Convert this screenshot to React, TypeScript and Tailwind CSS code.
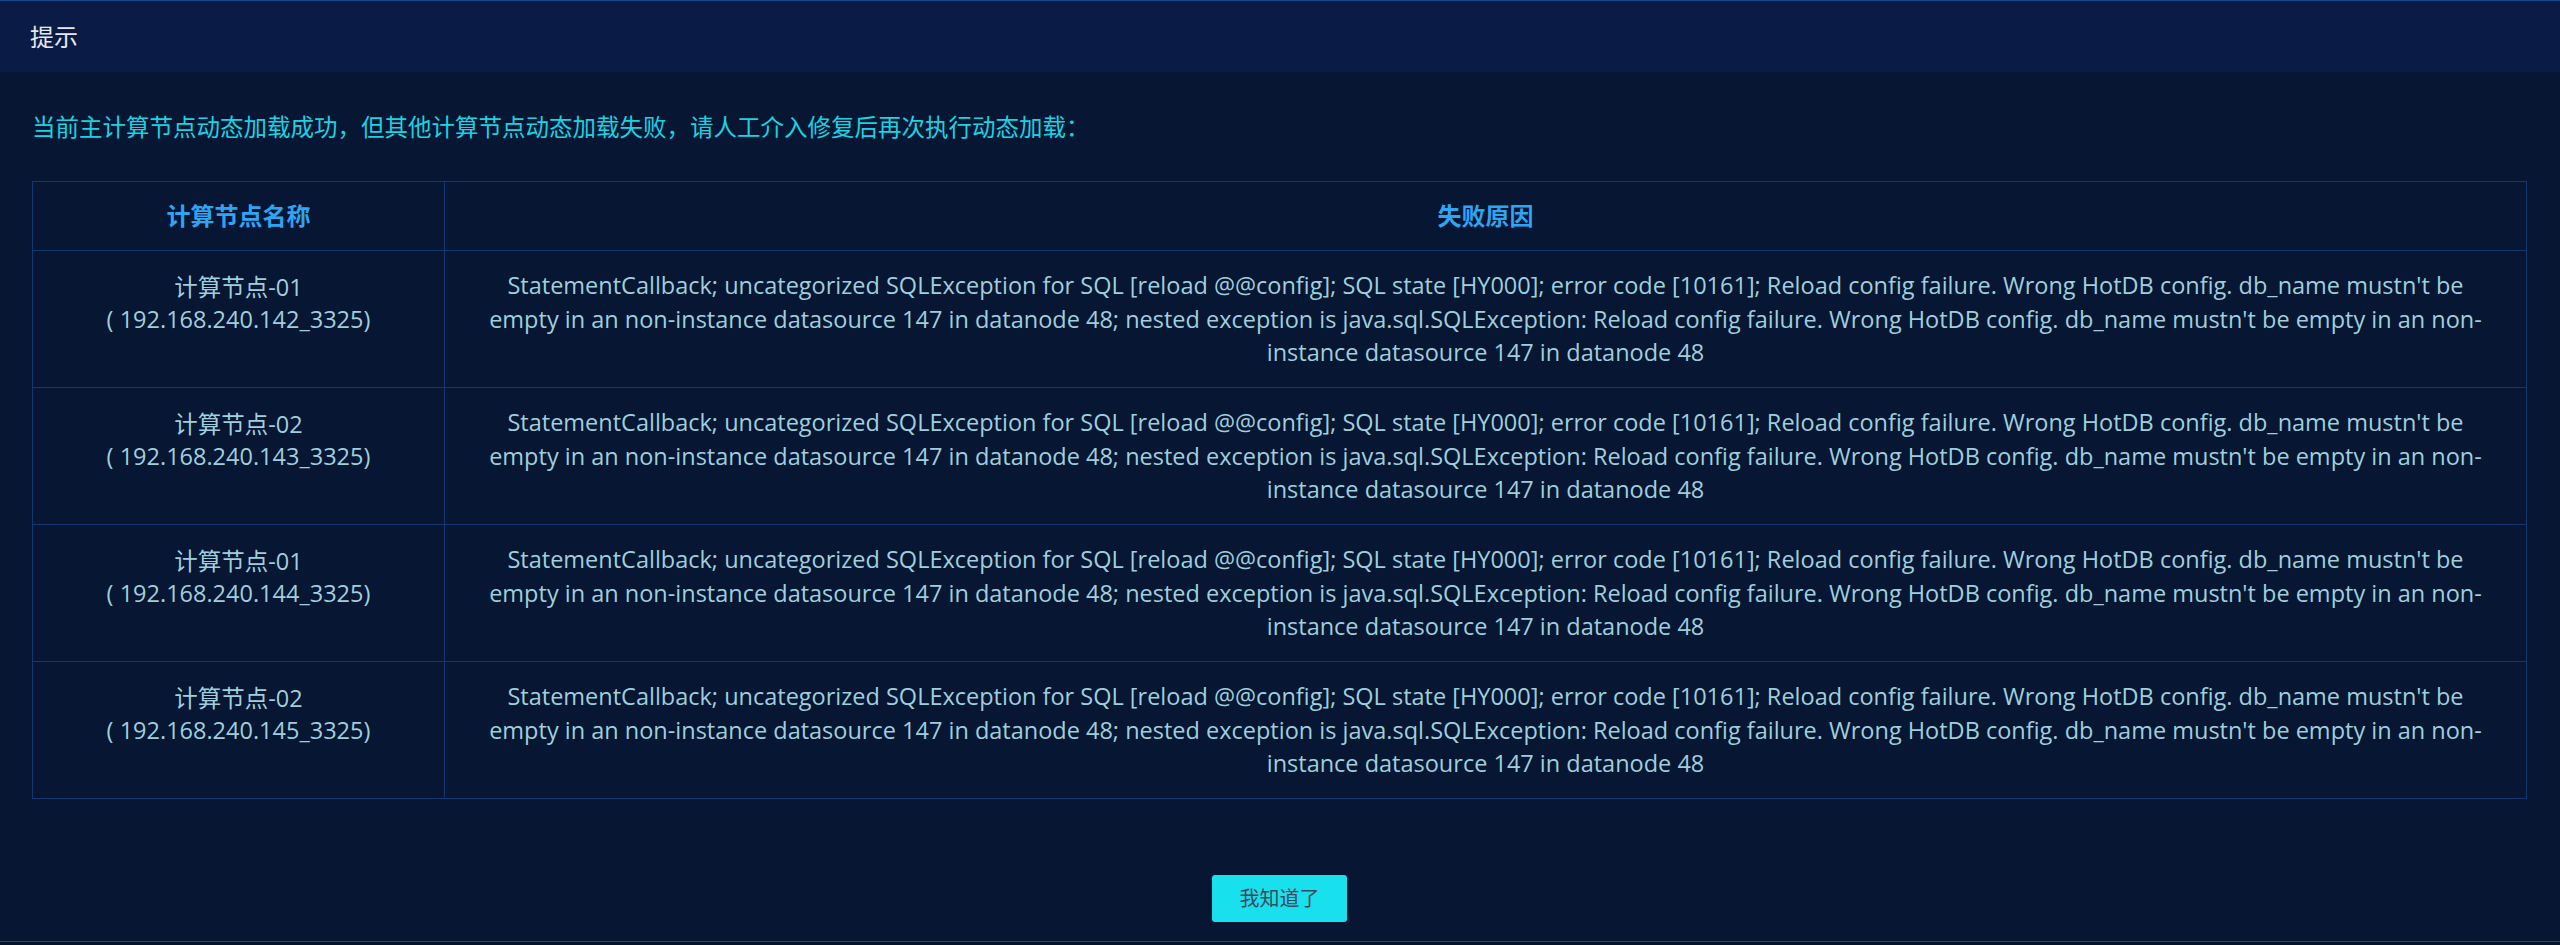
import React from "react";

const rows = [
  { name: "计算节点-01", ip: "( 192.168.240.142_3325)" },
  { name: "计算节点-02", ip: "( 192.168.240.143_3325)" },
  { name: "计算节点-01", ip: "( 192.168.240.144_3325)" },
  { name: "计算节点-02", ip: "( 192.168.240.145_3325)" },
];

const reasonLines = [
  "StatementCallback; uncategorized SQLException for SQL [reload @@config]; SQL state [HY000]; error code [10161]; Reload config failure. Wrong HotDB config. db_name mustn't be",
  "empty in an non-instance datasource 147 in datanode 48; nested exception is java.sql.SQLException: Reload config failure. Wrong HotDB config. db_name mustn't be empty in an non-",
  "instance datasource 147 in datanode 48",
];

export default function App() {
  return (
    <div
      className="w-[2560px] h-[945px] bg-[#051329] overflow-hidden"
      style={{ fontFamily: '"Open Sans", "Noto Sans CJK SC", sans-serif' }}
    >
      <div className="h-[942px] flex flex-col bg-[#061633] border-t border-b border-[#1b4a8a]">
        <div className="h-[71px] shrink-0 bg-[#0a1c45] flex items-center pl-[30px] text-[24px] text-[#e4e8f0]">
          提示
        </div>
        <div className="flex-1 flex flex-col pl-[32px] pr-[33px]">
          <div className="mt-[37px] h-[36px] leading-[36px] text-[23.5px] text-[#19d3e2]">
            当前主计算节点动态加载成功，但其他计算节点动态加载失败，请人工介入修复后再次执行动态加载：
          </div>
          <table className="mt-[36px] w-full table-fixed border-collapse border border-[#12386f]">
            <colgroup>
              <col className="w-[412px]" />
              <col />
            </colgroup>
            <thead>
              <tr className="h-[69px]">
                <th className="border border-[#12386f] text-center text-[24px] font-bold text-[#2ea5f2] align-middle">
                  计算节点名称
                </th>
                <th className="border border-[#12386f] text-center text-[24px] font-bold text-[#2ea5f2] align-middle">
                  失败原因
                </th>
              </tr>
            </thead>
            <tbody>
              {rows.map((r, i) => (
                <tr key={i} className="h-[137px]">
                  <td className="border border-[#12386f] align-top pt-[20px] text-center text-[23.5px] leading-[32px] text-[#9fcfdc]">
                    <div>{r.name}</div>
                    <div className="whitespace-nowrap">{r.ip}</div>
                  </td>
                  <td className="border border-[#12386f] align-top pt-[18px] text-center text-[23.5px] leading-[33.5px] text-[#9fcfdc]">
                    {reasonLines.map((l, j) => (
                      <div key={j} className="whitespace-nowrap">
                        {l}
                      </div>
                    ))}
                  </td>
                </tr>
              ))}
            </tbody>
          </table>
          <div className="flex-1 flex items-end justify-center pb-[19px]">
            <button className="w-[135px] h-[47px] rounded-[3px] bg-[#19e0ed] text-[20px] text-[#3a4a5c]">
              我知道了
            </button>
          </div>
        </div>
      </div>
    </div>
  );
}
